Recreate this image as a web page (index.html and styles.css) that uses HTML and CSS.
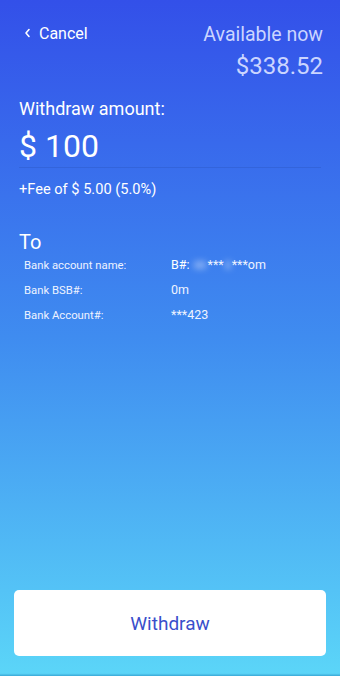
FILE: index.html
```html
<!DOCTYPE html>
<html lang="en">
<head>
    <meta charset="UTF-8">
    <meta name="viewport" content="width=device-width, initial-scale=1.0">
    <title>Withdraw</title>
    <link rel="stylesheet" href="styles.css">
</head>
<body>

<div class="screen">
    <!-- Шапка: отмена и доступный баланс -->
    <div class="header">
        <a class="cancel" href="#">
            <svg class="chevron" width="7" height="10" viewBox="0 0 7 10"><path d="M5 1.5 L2 5 L5 8.5" fill="none" stroke="#fff" stroke-width="1.6" stroke-linecap="round" stroke-linejoin="round"/></svg>
            Cancel
        </a>
        <div class="balance">
            <div class="balance-label">Available now</div>
            <div class="balance-value">$338.52</div>
        </div>
    </div>

    <!-- Сумма вывода -->
    <div class="amount">
        <div class="amount-label">Withdraw amount:</div>
        <div class="amount-value">$ 100</div>
        <div class="fee">+Fee of $ 5.00 (5.0%)</div>
    </div>

    <!-- Реквизиты -->
    <div class="to">
        <div class="to-title">To</div>
        <div class="details">
            <div class="row"><span class="label">Bank account name:</span><span class="value"><b>B#:</b><span class="blur"></span>***<span class="blur small"></span>***om</span></div>
            <div class="row"><span class="label">Bank BSB#:</span><span class="value">0m</span></div>
            <div class="row"><span class="label">Bank Account#:</span><span class="value">***423</span></div>
        </div>
    </div>

    <button class="withdraw-btn">Withdraw</button>
</div>

</body>
</html>
```

FILE: styles.css
```css
html, body {
    margin: 0;
    height: 100%;
}
body {
    font-family: Roboto, "Noto Sans", sans-serif;
    color: #fff;
    background: linear-gradient(180deg, #3350e9 0%, #3f8cf0 50%, #5bd5f8 99.6%, #3aa8d6 100%);
}
.screen {
    display: flex;
    flex-direction: column;
    min-height: 100vh;
    box-sizing: border-box;
    padding: 0 19px 20px;
}
.header {
    display: flex;
    justify-content: space-between;
    align-items: flex-start;
    padding-top: 22px;
}
.cancel {
    display: flex;
    align-items: center;
    gap: 8px;
    color: #fff;
    text-decoration: none;
    font-size: 16px;
    padding-left: 5px;
    margin-top: 2px;
}
.chevron {
    margin-top: -2px;
}
.balance {
    text-align: right;
    color: #cbd5ff;
    margin-right: -2px;
}
.balance-label {
    font-size: 19.5px;
    line-height: 24px;
    margin-top: 1px;
}
.balance-value {
    font-size: 24px;
    line-height: 30px;
    margin-top: 4px;
}
.amount {
    margin-top: 16px;
}
.amount-label {
    font-size: 18px;
    line-height: 24px;
}
.amount-value {
    font-size: 32px;
    line-height: 38px;
    margin-top: 6px;
    padding-bottom: 2px;
    border-bottom: 1px solid rgba(40, 80, 180, 0.3);
}
.fee {
    font-size: 14.6px;
    line-height: 18px;
    margin-top: 12px;
}
.to {
    margin-top: 31px;
}
.to-title {
    font-size: 20px;
    line-height: 26px;
}
.details {
    display: flex;
    flex-direction: column;
    gap: 6px;
    margin-top: 1px;
    padding-left: 5px;
}
.row {
    display: flex;
    align-items: baseline;
    line-height: 18px;
}
.label {
    width: 147px;
    font-size: 11.3px;
    color: #eef3ff;
}
.value {
    font-size: 12.5px;
    color: #eef3ff;
}
.value b {
    font-weight: 400;
    color: #fff;
}
.blur {
    display: inline-block;
    width: 12px;
    height: 8px;
    margin: 0 2px 0 4px;
    background: rgba(255, 255, 255, 0.35);
    filter: blur(3px);
}
.blur.small {
    width: 6px;
    margin: 0 1px;
}
.withdraw-btn {
    margin-top: auto;
    margin-left: -5px;
    margin-right: -5px;
    height: 66px;
    border: none;
    border-radius: 5px;
    background: #fff;
    color: #3a4fcb;
    font-family: Roboto, "Noto Sans", sans-serif;
    font-size: 19px;
}
```
